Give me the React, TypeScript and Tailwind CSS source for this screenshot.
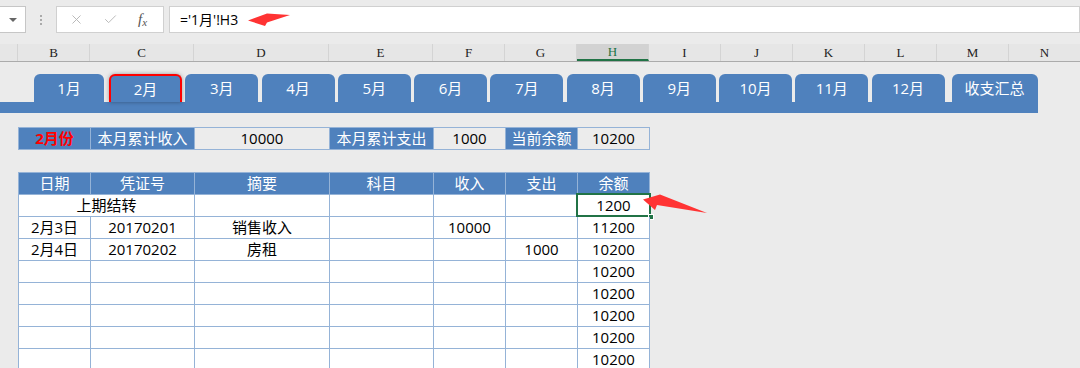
import { X, Check } from "lucide-react";

const colHeads = [
  { l: "", w: "w-[18px]" },
  { l: "B", w: "w-[72px]" },
  { l: "C", w: "w-[104px]" },
  { l: "D", w: "w-[135px]" },
  { l: "E", w: "w-[104px]" },
  { l: "F", w: "w-[72px]" },
  { l: "G", w: "w-[72px]" },
  { l: "H", w: "w-[72px]", active: true },
  { l: "I", w: "w-[72px]" },
  { l: "J", w: "w-[72px]" },
  { l: "K", w: "w-[72px]" },
  { l: "L", w: "w-[72px]" },
  { l: "M", w: "w-[72px]" },
  { l: "N", w: "w-[72px]" },
];

const months = ["3月", "4月", "5月", "6月", "7月", "8月", "9月", "10月", "11月", "12月"];

const heads = ["日期", "凭证号", "摘要", "科目", "收入", "支出", "余额"];

type Row = { a?: string; b?: string; c?: string; d?: string; e?: string; f?: string; h: string; merged?: boolean; selected?: boolean };

const rows: Row[] = [
  { a: "上期结转", merged: true, h: "1200", selected: true },
  { a: "2月3日", b: "20170201", c: "销售收入", e: "10000", h: "11200" },
  { a: "2月4日", b: "20170202", c: "房租", f: "1000", h: "10200" },
  { h: "10200" },
  { h: "10200" },
  { h: "10200" },
  { h: "10200" },
  { h: "10200" },
];

const cell = "h-[22px] border-r border-b border-[#95b3d7] flex items-center justify-center";
const grid = "grid grid-cols-[72px_104px_135px_104px_72px_72px_72px] border-l border-t border-[#95b3d7] w-[632px] ml-[18px]";

export default function App() {
  return (
    <div className="relative w-[1080px] h-[368px] overflow-hidden bg-[#ebebeb] font-['Open_Sans','Noto_Sans_CJK_SC',sans-serif] text-[15px] text-black">
      {/* formula bar */}
      <div className="h-[44px] pt-[6px] flex items-start">
        <div className="w-[26px] h-[27px] bg-white border-y border-r border-[#c6c6c6] flex items-center justify-center">
          <div className="w-0 h-0 border-l-[4px] border-r-[4px] border-t-[4px] border-l-transparent border-r-transparent border-t-[#666]" />
        </div>
        <div className="w-[30px] h-[27px] flex flex-col items-center justify-center gap-[2px]">
          <span className="w-[2px] h-[2px] bg-[#aaa]" />
          <span className="w-[2px] h-[2px] bg-[#aaa]" />
          <span className="w-[2px] h-[2px] bg-[#aaa]" />
        </div>
        <div className="w-[108px] h-[27px] bg-white border border-[#d0d0d0] flex items-center">
          <X className="w-[15px] h-[15px] text-[#b5b5b5] ml-[12px]" strokeWidth={1.5} />
          <Check className="w-[15px] h-[15px] text-[#b5b5b5] ml-[19px]" strokeWidth={1.5} />
          <span className="ml-[20px] font-['Liberation_Serif',serif] italic text-[15px] text-[#555] leading-none">
            f<span className="text-[11px] relative top-[2px]">x</span>
          </span>
        </div>
        <div className="ml-[5px] flex-1 h-[27px] bg-white border border-[#d0d0d0] flex items-center pl-[10px] text-[14px]">
          ='1月'!H3
        </div>
      </div>

      {/* column headers */}
      <div className="flex h-[18px] bg-[#e6e6e6] border-b border-[#ababab]">
        {colHeads.map((c, i) => (
          <div
            key={i}
            className={`${c.w} shrink-0 border-r border-[#d4d4d4] flex items-center justify-center font-['Liberation_Serif',serif] text-[13px] ${
              c.active ? "bg-[#d2d2d2] text-[#217346] border-b-2 border-b-[#217346]" : "text-[#222]"
            }`}
          >
            {c.l}
          </div>
        ))}
      </div>

      {/* sheet */}
      <div className="pt-[12px]">
        <div className="flex items-end h-[28px] pl-[34px] text-white">
          <div className="w-[70px] h-[28px] bg-[#4f81bd] rounded-t-[6px] flex items-center justify-center">1月</div>
          <div className="ml-[5px] w-[73px] h-[28px] bg-[#4f81bd] rounded-t-[6px] border-2 border-b-0 border-[#ff0000] shadow-[0_0_4px_rgba(0,0,0,0.35)] flex items-center justify-center">
            2月
          </div>
          {months.map((m) => (
            <div key={m} className="ml-[3.25px] w-[73px] h-[28px] bg-[#4f81bd] rounded-t-[6px] flex items-center justify-center">
              {m}
            </div>
          ))}
          <div className="ml-[7px] w-[86px] h-[28px] bg-[#4f81bd] rounded-t-[6px] flex items-center justify-center">收支汇总</div>
        </div>
        <div className="w-[1038px] h-[11px] bg-[#4f81bd]" />

        {/* summary */}
        <div className={`${grid} mt-[14px]`}>
          <div className={`${cell} bg-[#4f81bd] text-[#ff0000] font-bold`}>2月份</div>
          <div className={`${cell} bg-[#4f81bd] text-white`}>本月累计收入</div>
          <div className={`${cell} bg-[#ececec]`}>10000</div>
          <div className={`${cell} bg-[#4f81bd] text-white`}>本月累计支出</div>
          <div className={`${cell} bg-[#ececec]`}>1000</div>
          <div className={`${cell} bg-[#4f81bd] text-white`}>当前余额</div>
          <div className={`${cell} bg-[#ececec]`}>10200</div>
        </div>

        {/* ledger */}
        <div className={`${grid} mt-[22px]`}>
          {heads.map((h) => (
            <div key={h} className={`${cell} bg-[#4f81bd] text-white`}>
              {h}
            </div>
          ))}
          {rows.map((r, i) => (
            <div key={i} className="contents">
              {r.merged ? (
                <div className={`${cell} col-span-2 bg-white`}>{r.a}</div>
              ) : (
                <>
                  <div className={`${cell} bg-white`}>{r.a}</div>
                  <div className={`${cell} bg-white`}>{r.b}</div>
                </>
              )}
              <div className={`${cell} bg-white`}>{r.c}</div>
              <div className={`${cell} bg-white`}>{r.d}</div>
              <div className={`${cell} bg-white`}>{r.e}</div>
              <div className={`${cell} bg-white`}>{r.f}</div>
              <div className={`${cell} bg-white relative`}>
                {r.h}
                {r.selected && (
                  <>
                    <div className="absolute left-[-2px] top-[-2px] right-[-2px] bottom-[-1px] border-2 border-[#217346]" />
                    <div className="absolute right-[-5px] bottom-[-4px] w-[6px] h-[6px] bg-[#217346] border border-white" />
                  </>
                )}
              </div>
            </div>
          ))}
        </div>
      </div>

      {/* annotation arrows */}
      <svg className="absolute left-0 top-0 pointer-events-none" width="1080" height="368">
        <polygon points="248,20.5 267,13.5 290,15 267,22.5 265,26" fill="#ff3333" />
        <polygon points="643,199.5 660,194.5 707,213 657,205 655,210" fill="#ff3333" />
      </svg>
    </div>
  );
}
